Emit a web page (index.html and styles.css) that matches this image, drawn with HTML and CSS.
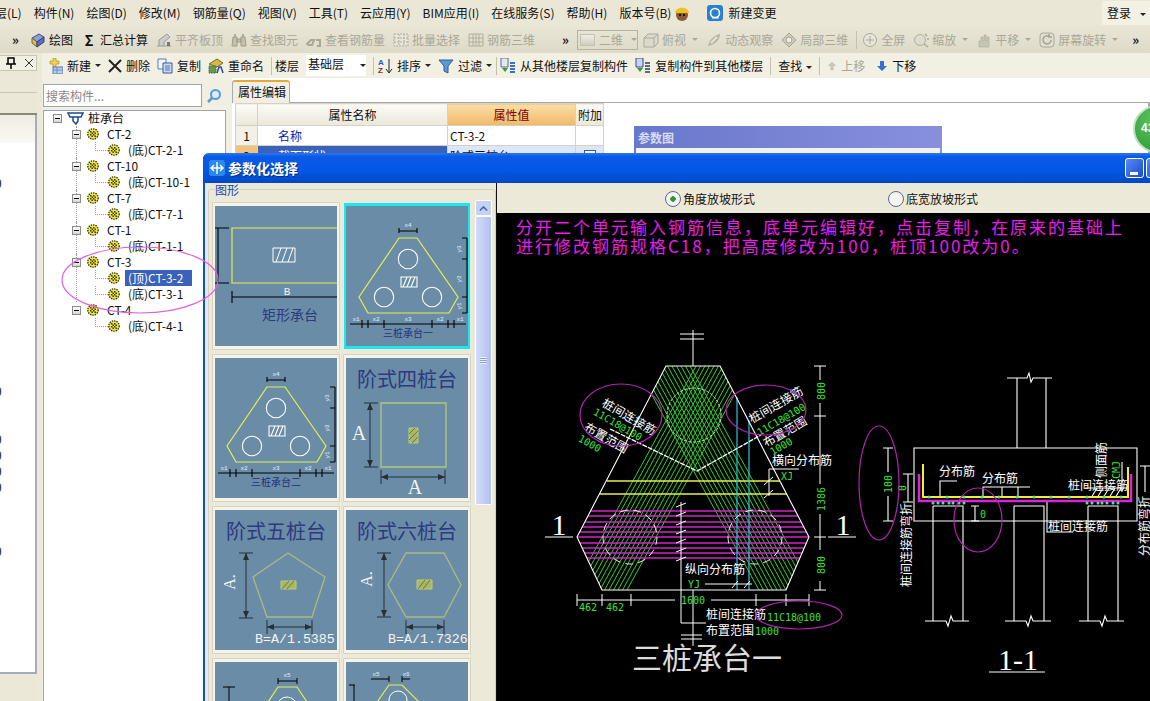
FILE: index.html
```html
<!DOCTYPE html>
<html lang="zh-CN">
<head>
  <meta charset="UTF-8" />
  <title>钢筋算量 - 参数化选择</title>
  <link rel="stylesheet" href="styles.css">
</head>
<body>
  <!-- Shared icons -->
  <svg class="sprites" aria-hidden="true">
    <symbol id="gear" viewBox="0 0 12 12">
      <circle cx="6" cy="6" r="5.200" fill="#f4e83c" stroke="#2a2a00" stroke-width="1.300" stroke-dasharray="1.400 1"/>
      <path d="M3 3h1.500v1.500H3zM6 3h1.500v1.500H6zM4.500 4.500H6V6H4.500zM7.500 4.500H9V6H7.500zM3 6h1.500v1.500H3zM6 6h1.500v1.500H6zM4.500 7.500H6V9H4.500zM7.500 7.500H9V9H7.500z" fill="#3a3a10"/>
    </symbol>
    <symbol id="i-draw" viewBox="0 0 16 16">
      <path d="M2 6l7-4 5 3-7 5z" fill="#8aa0d8" stroke="#4a4a8a"/>
      <path d="M2 6l5 4v5l-5-4z" fill="#d8c050" stroke="#6a6a40"/>
      <path d="M7 10l7-5v5l-7 5z" fill="#5a70b8" stroke="#3a3a7a"/>
    </symbol>
    <symbol id="i-flat" viewBox="0 0 16 16">
      <path d="M1 14h14M3 14V8l8-6 3 3-6 5v4" fill="#ccc" stroke="#999"/>
      <path d="M11 10h3v4h-3z" fill="#777"/>
    </symbol>
    <symbol id="i-find" viewBox="0 0 16 16">
      <path d="M2 5h4v9H1zM10 5h4l1 9h-5zM6 7h4v3H6z" fill="#c4c0ac" stroke="#a09c88"/>
      <path d="M3 2h2v3H3zM11 2h2v3h-2z" fill="#aaa"/>
    </symbol>
    <symbol id="i-view" viewBox="0 0 16 16">
      <path d="M1 12l4-4h3l-2 5H3zM10 8h4v6h-3" fill="none" stroke="#aaa69a" stroke-width="2"/>
    </symbol>
    <symbol id="i-batch" viewBox="0 0 16 16">
      <path d="M1 2h14v12H1zM1 6h14M1 10h14M6 2v12M11 2v12" fill="#e8e6da" stroke="#b0ae9e" stroke-dasharray="2 1"/>
    </symbol>
    <symbol id="i-3d" viewBox="0 0 16 16">
      <path d="M1 2h14v12H1zM1 6h14M1 10h14M5 2v12M8 2v12M11 2v12" fill="none" stroke="#b0ae9e"/>
    </symbol>
    <symbol id="i-cube" viewBox="0 0 16 16">
      <path d="M1 6l4-4h10v9l-4 4H1z" fill="#dcdacc" stroke="#aaa89a"/>
      <path d="M1 6h10v9M11 6l4-4" fill="none" stroke="#aaa89a"/>
    </symbol>
    <symbol id="i-orbit" viewBox="0 0 16 16">
      <path d="M2 14C3 8 8 3 14 2c0 6-5 11-12 12z" fill="#b8b8a8"/>
      <path d="M5 11l6-6" stroke="#e4e2d4" stroke-width="2"/>
    </symbol>
    <symbol id="i-local" viewBox="0 0 16 16">
      <path d="M8 1l7 7-7 7-7-7z" fill="#cfcdbf" stroke="#a4a294"/>
      <circle cx="8" cy="8" r="3" fill="#eeecdf" stroke="#a4a294"/>
    </symbol>
    <symbol id="i-full" viewBox="0 0 16 16">
      <circle cx="8" cy="8" r="6.500" fill="#e8e6da" stroke="#a8a89c"/>
      <path d="M8 4v8M4 8h8" stroke="#a8a89c"/>
    </symbol>
    <symbol id="i-zoom" viewBox="0 0 16 16">
      <circle cx="7" cy="8" r="5.500" fill="#dcdcd0" stroke="#b0b0a4"/>
      <path d="M11 12l4 3M12 2l2 2M14 7h2" stroke="#a8a89c" stroke-width="1.500"/>
    </symbol>
    <symbol id="i-pan" viewBox="0 0 16 16">
      <path d="M3 15V9h2V5h2v4h1V3h2v6h1V5h2v10z" fill="#c8c6b6" stroke="#aaa89a" stroke-width=".6"/>
    </symbol>
    <symbol id="i-rotate" viewBox="0 0 16 16">
      <rect x="1" y="1" width="14" height="14" rx="3" fill="#e0dece" stroke="#aaa89a"/>
      <path d="M12 8a4 4 0 1 1-2-3.500M10 2v3h3" fill="none" stroke="#a0a094" stroke-width="1.400"/>
    </symbol>
    <symbol id="i-new" viewBox="0 0 16 16">
      <path d="M3 3h3V0h3v3h3v3H9v3H6V6H3z" fill="#f0d050" stroke="#a08820" stroke-width=".6"/>
      <rect x="6" y="9" width="10" height="7" fill="#b8cdee" stroke="#5a7ab0"/>
      <path d="M6 12h10M10 9v7" stroke="#5a7ab0" stroke-width=".7"/>
    </symbol>
    <symbol id="i-copy" viewBox="0 0 16 16">
      <path d="M1 1h8v10H1z" fill="#f4f6fc" stroke="#5a7ab0"/>
      <path d="M6 5h9v10H6z" fill="#c8daf4" stroke="#3a5a9a"/>
      <path d="M8 8h5M8 10h5M8 12h5" stroke="#3a5a9a" stroke-width=".8"/>
    </symbol>
    <symbol id="i-rename" viewBox="0 0 16 16">
      <path d="M1 6l8-5 6 4-6 4z" fill="#d8b848" stroke="#806818"/>
      <path d="M1 8h7v7H1z" fill="#6a9a50" stroke="#3a6a30" stroke-dasharray="1.500 1"/>
      <path d="M9 15l2-6h2l2 6" fill="none" stroke="#2a4a9a" stroke-width="1.500"/>
    </symbol>
    <symbol id="i-from" viewBox="0 0 16 16">
      <path d="M1 0h7v9H1z" fill="#e4e8f4" stroke="#5a6a8a"/>
      <path d="M2 10l3 4 3-4z" fill="#3a9a3a"/>
      <path d="M10 5h5M10 8h5M10 11h5M10 14h5" stroke="#3a70c8" stroke-width="2"/>
    </symbol>
    <symbol id="i-to" viewBox="0 0 16 16">
      <path d="M1 0h7v9H1z" fill="#c8d4f4" stroke="#3a4a8a"/>
      <path d="M2 10l3 4 3-4z" fill="#3a9a3a"/>
      <path d="M10 5h5M10 8h5M10 11h5M10 14h5" stroke="#5a6a7a" stroke-width="2"/>
    </symbol>
    <symbol id="i-gem" viewBox="0 0 12 12">
      <path d="M6 1l5 5H8v5H4V6H1z"/>
    </symbol>

    <!-- three pile cap thumbnail, shared by two cards -->
    <symbol id="tri-cap" viewBox="0 0 122 140">
      <path d="M52 29h18l41 59-9 16H21l-9-16z" fill="none" stroke="#e0f050" stroke-width="1.200"/>
      <g fill="none" stroke="#fff" stroke-width="1.100">
        <circle cx="61" cy="50" r="9.700"/>
        <circle cx="37" cy="88" r="9.700"/>
        <circle cx="85" cy="88" r="9.700"/>
        <path d="M54 68h16v10H54zM56 78l4-10M60 78l4-10M64 78l4-10"/>
      </g>
      <path d="M52 19v5M70 19v5M52 22h18M120 29v75M115 29h5M115 50h5M115 88h5M115 104h5M3 115h116M15 111v8M21 111v8M37 111v8M85 111v8M101 111v8M107 111v8" fill="none" stroke="#000" stroke-width="1.100"/>
      <g class="thumb-tiny">
        <text x="61" y="18">x4</text>
        <text x="9" y="112">x1</text>
        <text x="29" y="112">x2</text>
        <text x="61" y="112">x3</text>
        <text x="93" y="112">x2</text>
        <text x="113" y="112">x1</text>
        <text transform="rotate(-90 114 40)" x="114" y="40">y3</text>
        <text transform="rotate(-90 114 70)" x="114" y="70">y2</text>
        <text transform="rotate(-90 114 97)" x="114" y="97">y1</text>
      </g>
    </symbol>
  </svg>

  <!-- Menu -->
  <div class="menubar">
    <span>层(L)</span><span>构件(N)</span><span>绘图(D)</span><span>修改(M)</span><span>钢筋量(Q)</span>
    <span>视图(V)</span><span>工具(T)</span><span>云应用(Y)</span><span>BIM应用(I)</span><span>在线服务(S)</span>
    <span>帮助(H)</span><span>版本号(B)</span>
    <svg class="icon-16 menu-hat" viewBox="0 0 16 16">
      <circle cx="8" cy="10" r="6" fill="#8a5a30"/>
      <path d="M1 8C2 1 14 1 15 8z" fill="#f0c020"/>
      <circle cx="6" cy="10" r="1" fill="#000"/><circle cx="10" cy="10" r="1" fill="#000"/>
    </svg>
    <svg class="icon-16 menu-change" viewBox="0 0 16 16">
      <rect width="16" height="16" rx="3" fill="#2a80d0"/>
      <circle cx="8" cy="8" r="4.500" fill="none" stroke="#fff" stroke-width="1.600"/>
      <path d="M5 13h7" stroke="#fff"/>
    </svg>
    <span class="menu-change-label">新建变更</span>
    <span class="login">登录 <i class="caret"></i></span>
  </div>

  <!-- Toolbar: draw and view -->
  <div class="toolbar toolbar-view">
    <span class="chevron">»</span>
    <span class="tool"><svg class="icon-16"><use href="#i-draw"/></svg>绘图</span>
    <span class="tool"><b class="sigma">Σ</b>汇总计算</span>
    <span class="tool off"><svg class="icon-16"><use href="#i-flat"/></svg>平齐板顶</span>
    <span class="tool off"><svg class="icon-16"><use href="#i-find"/></svg>查找图元</span>
    <span class="tool off"><svg class="icon-16"><use href="#i-view"/></svg>查看钢筋量</span>
    <span class="tool off"><svg class="icon-16"><use href="#i-batch"/></svg>批量选择</span>
    <span class="tool off"><svg class="icon-16"><use href="#i-3d"/></svg>钢筋三维</span>
    <span class="chevron chevron-mid">»</span>
    <span class="combo-2d"><i class="swatch"></i>二维<i class="caret"></i></span>
    <span class="tool off"><svg class="icon-16"><use href="#i-cube"/></svg>俯视<i class="caret"></i></span>
    <span class="tool off"><svg class="icon-16"><use href="#i-orbit"/></svg>动态观察</span>
    <span class="tool off"><svg class="icon-16"><use href="#i-local"/></svg>局部三维</span>
    <i class="sep"></i>
    <span class="tool off"><svg class="icon-16"><use href="#i-full"/></svg>全屏</span>
    <span class="tool off"><svg class="icon-16"><use href="#i-zoom"/></svg>缩放<i class="caret"></i></span>
    <span class="tool off"><svg class="icon-16"><use href="#i-pan"/></svg>平移<i class="caret"></i></span>
    <span class="tool off"><svg class="icon-16"><use href="#i-rotate"/></svg>屏幕旋转<i class="caret"></i></span>
    <span class="chevron chevron-end">»</span>
  </div>

  <div class="workspace">
    <!-- Collapsed dock on the far left -->
    <div class="dock">
      <div class="dock-head">
        <svg class="dock-pin" viewBox="0 0 10 12"><path d="M2 1h6v6H2zM0 7h10M5 7v5" fill="none" stroke="#000" stroke-width="1.500"/></svg>
        <svg class="dock-close" viewBox="0 0 10 10"><path d="M1 1l8 8M9 1l-8 8" stroke="#333"/></svg>
      </div>
      <div class="dock-bar"></div>
      <div class="dock-bar dock-bar-dark"></div>
      <div class="dock-fade"></div>
      <ul class="dock-list">
        <li></li><li></li><li>0</li><li></li><li></li><li></li><li></li><li></li><li></li><li></li><li></li><li></li><li></li>
        <li></li><li></li><li>0</li><li></li><li></li><li>0</li><li>0</li><li>0</li><li>0</li><li></li><li></li><li></li><li>0</li>
      </ul>
      <div class="dock-foot"></div>
    </div>

    <div class="main">
      <!-- Toolbar: components -->
      <div class="toolbar toolbar-parts">
        <span class="tool"><svg class="icon-16"><use href="#i-new"/></svg>新建<i class="caret"></i></span>
        <span class="tool"><svg class="icon-14" viewBox="0 0 14 14"><path d="M1 1l12 12M13 1L1 13" stroke="#222" stroke-width="2"/></svg>删除</span>
        <span class="tool"><svg class="icon-16"><use href="#i-copy"/></svg>复制</span>
        <span class="tool"><svg class="icon-16"><use href="#i-rename"/></svg>重命名</span>
        <i class="sep"></i>
        <span>楼层</span>
        <span class="floor-box">基础层<i class="caret"></i></span>
        <i class="sep"></i>
        <span class="tool"><svg class="icon-16" viewBox="0 0 16 16"><text class="sort-a" x="1" y="7">A</text><text class="sort-z" x="1" y="15">Z</text><path d="M12 1v13M9 11l3 4 3-4" fill="none" stroke="#222"/></svg>排序<i class="caret"></i></span>
        <span class="tool"><svg class="icon-16" viewBox="0 0 16 16"><path d="M1 2h14L10 8v7l-4-2V8z" fill="#5a9ad8" stroke="#2a5a98"/></svg>过滤<i class="caret"></i></span>
        <i class="sep sep-tight"></i>
        <span class="tool"><svg class="icon-16"><use href="#i-from"/></svg>从其他楼层复制构件</span>
        <span class="tool"><svg class="icon-16"><use href="#i-to"/></svg>复制构件到其他楼层</span>
        <i class="sep sep-roomy"></i>
        <span class="find">查找<i class="caret"></i></span>
        <i class="sep sep-roomy"></i>
        <span class="tool off"><svg class="icon-12 arrow-off"><use href="#i-gem"/></svg>上移</span>
        <span class="tool tool-down"><svg class="icon-12 arrow-on" viewBox="0 0 12 12"><path d="M6 11L1 6h3V1h4v5h3z"/></svg>下移</span>
      </div>

      <div class="content">
        <!-- Component tree -->
        <div class="nav">
          <div class="search">
            <input class="search-input" type="text" placeholder="搜索构件...">
            <svg class="search-btn" viewBox="0 0 16 16"><circle cx="9.500" cy="6.500" r="4.500" fill="#d8ecfa" stroke="#5a9ad0" stroke-width="2"/><path d="M6 10l-4 4" stroke="#5a9ad0" stroke-width="2.500"/></svg>
          </div>
          <div class="tree">
            <div class="node root">
              <i class="toggle"></i>
              <svg class="root-icon" viewBox="0 0 17 14"><path d="M1 2h15l-2 4H3zM6 6h5v4l-2 3-3-3z" fill="#fff" stroke="#1a4a8a" stroke-width="1.500"/></svg>
              <span>桩承台</span>
            </div>
            <div class="branches">
              <div class="branch">
                <div class="node"><i class="toggle"></i><svg class="gear"><use href="#gear"/></svg><span>CT-2</span></div>
                <div class="node leaf"><svg class="gear"><use href="#gear"/></svg><span>(底)CT-2-1</span></div>
              </div>
              <div class="branch">
                <div class="node"><i class="toggle"></i><svg class="gear"><use href="#gear"/></svg><span>CT-10</span></div>
                <div class="node leaf"><svg class="gear"><use href="#gear"/></svg><span>(底)CT-10-1</span></div>
              </div>
              <div class="branch">
                <div class="node"><i class="toggle"></i><svg class="gear"><use href="#gear"/></svg><span>CT-7</span></div>
                <div class="node leaf"><svg class="gear"><use href="#gear"/></svg><span>(底)CT-7-1</span></div>
              </div>
              <div class="branch">
                <div class="node"><i class="toggle"></i><svg class="gear"><use href="#gear"/></svg><span>CT-1</span></div>
                <div class="node leaf"><svg class="gear"><use href="#gear"/></svg><span>(底)CT-1-1</span></div>
              </div>
              <div class="branch">
                <div class="node"><i class="toggle"></i><svg class="gear"><use href="#gear"/></svg><span>CT-3</span></div>
                <div class="node leaf"><svg class="gear"><use href="#gear"/></svg><span class="picked">(顶)CT-3-2</span></div>
                <div class="node leaf"><svg class="gear"><use href="#gear"/></svg><span>(底)CT-3-1</span></div>
              </div>
              <div class="branch">
                <div class="node"><i class="toggle"></i><svg class="gear"><use href="#gear"/></svg><span>CT-4</span></div>
                <div class="node leaf"><svg class="gear"><use href="#gear"/></svg><span>(底)CT-4-1</span></div>
              </div>
            </div>
          </div>
        </div>

        <!-- Property editor, mostly behind the dialog -->
        <div class="editor">
          <div class="tabs"><span class="tab">属性编辑</span></div>
          <div class="editor-body">
            <table class="props">
              <tr>
                <th class="col-no"></th>
                <th class="col-name">属性名称</th>
                <th class="col-value">属性值</th>
                <th class="col-extra">附加</th>
              </tr>
              <tr>
                <td class="row-no">1</td>
                <td class="prop-name">名称</td>
                <td>CT-3-2</td>
                <td></td>
              </tr>
              <tr class="row-on">
                <td class="row-no">2</td>
                <td class="prop-name">截面形状</td>
                <td>阶式三桩台</td>
                <td><i class="check"></i></td>
              </tr>
            </table>
            <div class="param-panel">
              <div class="param-title">参数图</div>
              <div class="param-view"></div>
            </div>
          </div>
        </div>
      </div>
    </div>
  </div>

  <!-- Progress badge -->
  <div class="badge">43</div>

  <!-- Dialog -->
  <div class="dialog">
    <div class="dialog-title">
      <svg class="dialog-icon" viewBox="0 0 16 16">
        <rect width="16" height="16" rx="3" fill="#2a8ae8"/>
        <path d="M8 2v12M2 8h12M5 5l-3 3 3 3M11 5l3 3-3 3" fill="none" stroke="#fff" stroke-width="1.400"/>
      </svg>
      <span class="dialog-name">参数化选择</span>
      <span class="win-btn win-min"><i></i></span>
      <span class="win-btn"></span>
    </div>
    <div class="dialog-body">
      <!-- Shape picker -->
      <fieldset class="shapes">
        <legend>图形</legend>
        <div class="shapes-inner">
          <div class="card-grid">
            <div class="card">
              <svg class="thumb" viewBox="0 0 122 140">
                <path d="M122 22H17v55h105" fill="none" stroke="#e0f050" stroke-width="1.200"/>
                <path d="M0 22h14M0 77h14M3 22v55M17 85v12M17 91h105" fill="none" stroke="#000" stroke-width="1.100"/>
                <path d="M58 42h22v14H58zM61 56l5-14M67 56l5-14M73 56l5-14" fill="none" stroke="#fff"/>
                <text class="thumb-mid" x="72" y="89">B</text>
                <text class="thumb-name" x="75" y="114">矩形承台</text>
              </svg>
            </div>
            <div class="card selected">
              <svg class="thumb" viewBox="0 0 122 140">
                <use href="#tri-cap" x="1" y="3" width="122" height="140"/>
                <text class="thumb-small" x="62" y="131">三桩承台一</text>
              </svg>
            </div>
            <div class="card">
              <svg class="thumb" viewBox="0 0 122 140">
                <use href="#tri-cap" width="122" height="140"/>
                <text class="thumb-small" x="61" y="128">三桩承台二</text>
              </svg>
            </div>
            <div class="card">
              <svg class="thumb" viewBox="0 0 122 140">
                <text class="thumb-title" x="61" y="29">阶式四桩台</text>
                <path d="M35 45h65v64H35z" fill="none" stroke="#b0c878" stroke-width="1.300"/>
                <path d="M63 70h9v15h-9z" fill="#a8b860" stroke="#c0cc70"/>
                <path d="M63 76l6-6M63 82l9-9M66 85l6-6" stroke="#6a7a50"/>
                <path d="M18 45h14M18 109h14M24 45v64M35 112v14M99 112v14M35 119h64" fill="none" stroke="#243038"/>
                <path d="M24 45l-3 7h6zM24 109l-3-7h6zM35 119l7-3v6zM99 119l-7-3v6z" fill="#243038"/>
                <text class="thumb-letter" x="13" y="82">A</text>
                <text class="thumb-letter" x="69" y="136">A</text>
              </svg>
            </div>
            <div class="card">
              <svg class="thumb" viewBox="0 0 122 140">
                <text class="thumb-title" x="61" y="29">阶式五桩台</text>
                <path d="M73 43l37 24-13 40H52L38 67z" fill="none" stroke="#a8bc80" stroke-width="1.300"/>
                <path d="M66 71h15v8H66z" fill="#a8b860" stroke="#c0cc70"/>
                <path d="M67 79l7-8M72 79l7-8" stroke="#6a7a50"/>
                <path d="M24 43h14M24 108h14M31 43v65M52 110v14M97 110v14M52 117h45" fill="none" stroke="#243038"/>
                <path d="M31 43l-3 7h6zM31 108l-3-7h6zM52 117l7-3v6zM97 117l-7-3v6z" fill="#243038"/>
                <text class="thumb-letter-side" transform="rotate(-90 20 72)" x="20" y="72">A.</text>
                <text class="thumb-formula" x="40" y="133">B=A/1.5385</text>
              </svg>
            </div>
            <div class="card">
              <svg class="thumb" viewBox="0 0 122 140">
                <text class="thumb-title" x="61" y="29">阶式六桩台</text>
                <path d="M60 43h38l17 32-17 32H60L42 75z" fill="none" stroke="#a8bc80" stroke-width="1.300"/>
                <path d="M71 70h15v9H71z" fill="#a8b860" stroke="#c0cc70"/>
                <path d="M72 79l7-9M77 79l7-9" stroke="#6a7a50"/>
                <path d="M31 43h14M31 107h14M38 43v64M60 110v14M98 110v14M60 117h38" fill="none" stroke="#243038"/>
                <path d="M38 43l-3 7h6zM38 107l-3-7h6zM60 117l7-3v6zM98 117l-7-3v6z" fill="#243038"/>
                <text class="thumb-letter-side" transform="rotate(-90 26 69)" x="26" y="69">A.</text>
                <text class="thumb-formula" x="42" y="133">B=A/1.7326</text>
              </svg>
            </div>
            <div class="card">
              <svg class="thumb" viewBox="0 0 122 140">
                <path d="M63 25h19l28 42H35z" fill="none" stroke="#e0f050" stroke-width="1.200"/>
                <circle cx="72" cy="45" r="10" fill="none" stroke="#fff"/>
                <path d="M63 16v6M82 16v6M63 19h19M8 25h12M14 25v50" fill="none" stroke="#000"/>
                <text class="thumb-tiny" x="72" y="15">x5</text>
              </svg>
            </div>
            <div class="card">
              <svg class="thumb" viewBox="0 0 122 140">
                <path d="M43 23h13l40 40H15z" fill="none" stroke="#e0f050" stroke-width="1.200"/>
                <circle cx="52" cy="38" r="9" fill="none" stroke="#fff"/>
                <path d="M25 17h18M43 14v6M56 14v6M56 17h8M3 23h6M8 23v40" fill="none" stroke="#000"/>
                <text class="thumb-tiny" x="30" y="14">x5</text>
                <text class="thumb-tiny" x="60" y="14">x6</text>
              </svg>
            </div>
          </div>
          <div class="scroll">
            <div class="scroll-up"><svg viewBox="0 0 10 6"><path d="M1 5l4-4 4 4" fill="none" stroke="#4a6ab0" stroke-width="1.800"/></svg></div>
            <div class="scroll-thumb"><i></i></div>
          </div>
        </div>
      </fieldset>

      <!-- Drawing view -->
      <div class="viewer">
        <div class="radio-row">
          <label class="radio on">角度放坡形式</label>
          <label class="radio">底宽放坡形式</label>
        </div>
        <div class="canvas">
          <p class="remark">分开二个单元输入钢筋信息，底单元编辑好，点击复制，在原来的基础上<br>进行修改钢筋规格C18，把高度修改为100，桩顶100改为0。</p>
          <!-- viewBox keeps page coordinates so the drawing is easy to measure -->
          <svg class="drawing" viewBox="497 213 653 488">
            <defs>
              <clipPath id="hex-clip"><path d="M666 362h54l89 171-23 53H602l-25-53z"/></clipPath>
              <path id="band" d="M573 586L696 362M577.500 586L700.500 362M582 586L705 362M586.500 586L709.500 362M591 586L714 362M595.500 586L718.500 362M600 586L723 362M604.500 586L727.500 362M609 586L732 362M613.500 586L736.500 362M618 586L741 362M622.500 586L745.500 362M627 586L750 362"/>
            </defs>

            <!-- plan: rebar -->
            <g clip-path="url(#hex-clip)">
              <g fill="none" stroke="#2fd02f">
                <use href="#band"/>
                <use href="#band" transform="translate(1386 0) scale(-1 1)"/>
              </g>
              <path d="M560 507h260M560 512h260M560 518h260M560 523h260M560 528h260M560 533h260M560 539h260M560 544h260M560 549h260M560 554h260" stroke="#d025c8" stroke-width="1.300"/>
            </g>
            <path d="M607 477h173M599 490h188" stroke="#e8ee50" stroke-width="1.300"/>
            <path d="M737 393v193M749 416v170" stroke="#28c4dc" stroke-width="1.200"/>

            <!-- plan: outline -->
            <path d="M666 362h54l89 171-23 53H602l-25-53z" fill="none" stroke="#fff" stroke-width="1.100"/>
            <g fill="none" stroke="#c8f0c0" stroke-dasharray="3 1.500">
              <circle cx="694" cy="411" r="27"/>
            </g>
            <g fill="none" stroke="#f0f0e0" stroke-dasharray="8 5">
              <circle cx="630" cy="533" r="27"/>
              <circle cx="755" cy="533" r="27"/>
            </g>
            <path d="M610 425l87 42 64-36" fill="none" stroke="#fff" stroke-width="1.300" stroke-dasharray="5 1"/>

            <!-- plan: section marks and leaders -->
            <g fill="none" stroke="#fff">
              <path d="M693 326v36M680 330h24M680 335h24M693 586v56M681 631h21M681 635h21"/>
              <path d="M681 498v121h25M676 503l10-4M676 512l10-4M676 521l10-4M676 530l10-4M676 539l10-4M676 548l10-4M676 557l10-4"/>
              <path d="M545 533h28M828 533h28"/>
              <path d="M820 362v14M820 399v81M820 510v36M820 577v9M814 362h12M814 412h12M814 533h12M814 586h12"/>
              <path d="M577 596h98M711 596h98M577 590v12M602 590v12M631 590v12M756 590v12M786 590v12M809 590v12"/>
              <path d="M769 465h30M769 465v27M764 481l9-8M764 494l9-8"/>
              <path d="M705 580h47M732 584l6-7M744 584l6-7"/>
            </g>

            <g class="cad-big">
              <text x="559" y="531">1</text>
              <text x="843" y="531">1</text>
            </g>

            <g class="cad-white">
              <text transform="rotate(30 629 413)" x="629" y="417">桩间连接筋</text>
              <text transform="rotate(30 606 434)" x="606" y="438">布置范围</text>
              <text transform="rotate(-30 776 401)" x="776" y="405">桩间连接筋</text>
              <text transform="rotate(-30 785 428)" x="785" y="432">布置范围</text>
              <text x="802" y="461">横向分布筋</text>
              <text x="715" y="570">纵向分布筋</text>
              <text x="736" y="615">桩间连接筋</text>
              <text x="730" y="631">布置范围</text>
            </g>
            <g class="cad-green">
              <text transform="rotate(30 618 420)" x="618" y="424">11C18@100</text>
              <text transform="rotate(30 590 439)" x="590" y="443">1000</text>
              <text transform="rotate(-30 781 415)" x="781" y="419">11C18@100</text>
              <text transform="rotate(-30 781 442)" x="781" y="446">1000</text>
              <text x="787" y="476">XJ</text>
              <text x="694" y="584">YJ</text>
              <text x="693" y="600">1600</text>
              <text x="588" y="607">462</text>
              <text x="615" y="607">462</text>
              <text x="794" y="617">11C18@100</text>
              <text x="767" y="631">1000</text>
              <text transform="rotate(-90 821 387)" x="821" y="391">800</text>
              <text transform="rotate(-90 821 495)" x="821" y="499">1386</text>
              <text transform="rotate(-90 821 561)" x="821" y="565">800</text>
            </g>
            <text class="cad-title" x="707" y="665">三桩承台一</text>

            <!-- section 1-1 -->
            <g fill="none" stroke="#fff" stroke-width="1.100">
              <path d="M914 444h223v73H914z"/>
              <path d="M1017 444v-70M1046 444v-70M1007 374h20l2-5 2 9 2-4h19"/>
              <path d="M933 502h30v115M933 502v115M925 617h21l2 5 3-10 2 5h16"/>
              <path d="M1014 502h30v115M1014 502v115M1005 617h21l2 5 3-10 2 5h18"/>
              <path d="M1088 502h30v115M1088 502v115M1079 617h21l2 5 3-10 2 5h17"/>
              <path d="M940 493v-16h17M983 493v-10h47M1002 483v10M1018 483v10"/>
              <path d="M1047 497v31h26"/>
              <path d="M1091 494l6-10M1097 494l6-10M1103 494l6-10M1109 494l6-10M1115 494l6-10M1085 484h42"/>
              <path d="M1122 458v30"/>
              <path d="M888 444v24M888 492v25M883 444h10M883 517h10"/>
              <path d="M908 470v28M903 470h10M903 498h10"/>
              <path d="M975 502v15M971 502h8M971 517h8"/>
              <path d="M1145 462v26M1140 462h10"/>
            </g>
            <path d="M923 460v33h205v-30" fill="none" stroke="#f0f030" stroke-width="2"/>
            <path d="M919 470v27h212v-27" fill="none" stroke="#e020e0" stroke-width="2.500"/>
            <g class="rebar-dots">
              <circle cx="929" cy="493" r="1.500"/><circle cx="947" cy="493" r="1.500"/><circle cx="964" cy="493" r="1.500"/>
              <circle cx="982" cy="493" r="1.500"/><circle cx="999" cy="493" r="1.500"/><circle cx="1017" cy="493" r="1.500"/>
              <circle cx="1034" cy="493" r="1.500"/><circle cx="1051" cy="493" r="1.500"/><circle cx="1069" cy="493" r="1.500"/>
              <circle cx="1087" cy="493" r="1.500"/><circle cx="1104" cy="493" r="1.500"/><circle cx="1121" cy="493" r="1.500"/>
              <circle cx="933" cy="499" r="1.500"/><circle cx="938" cy="499" r="1.500"/><circle cx="943" cy="499" r="1.500"/>
              <circle cx="949" cy="499" r="1.500"/><circle cx="953" cy="499" r="1.500"/><circle cx="959" cy="499" r="1.500"/>
              <circle cx="964" cy="499" r="1.500"/><circle cx="1087" cy="499" r="1.500"/><circle cx="1092" cy="499" r="1.500"/>
              <circle cx="1098" cy="499" r="1.500"/><circle cx="1102" cy="499" r="1.500"/><circle cx="1107" cy="499" r="1.500"/>
              <circle cx="1113" cy="499" r="1.500"/><circle cx="1118" cy="499" r="1.500"/>
            </g>
            <g class="cad-white">
              <text x="957" y="472">分布筋</text>
              <text x="1000" y="479">分布筋</text>
              <text x="1098" y="486">桩间连接筋</text>
              <text x="1078" y="527">桩间连接筋</text>
              <text transform="rotate(-90 1102 456)" x="1102" y="460">侧面筋</text>
              <text transform="rotate(-90 907 541)" x="907" y="545">桩间连接筋弯折</text>
              <text transform="rotate(-90 1145 522)" x="1145" y="526">分布筋弯折</text>
            </g>
            <g class="cad-green">
              <text transform="rotate(-90 888 480)" x="888" y="484">100</text>
              <text transform="rotate(-90 902 484)" x="902" y="488">0</text>
              <text x="983" y="514">0</text>
              <text class="cad-green-sm" transform="rotate(-90 1116 466)" x="1116" y="470">CMJ</text>
            </g>
            <text class="cad-section" x="1018" y="666">1-1</text>
            <path d="M989 668h56" stroke="#fff"/>

            <!-- hand drawn notes -->
            <g fill="none" stroke="#b024b0" stroke-width="1.200">
              <ellipse cx="621" cy="411" rx="41" ry="31"/>
              <ellipse cx="766" cy="406" rx="40" ry="25"/>
              <ellipse cx="799" cy="611" rx="43" ry="14"/>
              <ellipse cx="879" cy="479" rx="20" ry="57"/>
              <ellipse cx="978" cy="516" rx="24" ry="32"/>
            </g>
          </svg>
        </div>
      </div>
    </div>
  </div>

  <!-- Hand drawn ring around the picked component, over tree and dialog -->
  <svg class="note-ring" viewBox="0 0 162 72">
    <ellipse cx="81" cy="36" rx="78" ry="33" fill="none" stroke="#e060e0" stroke-width="1.200"/>
  </svg>
</body>
</html>
```

FILE: styles.css
```css
* {
  box-sizing: border-box;
}

html, body {
  height: 701px;
  overflow: hidden;
}

body {
  position: relative;
  width: 1150px;
  margin: 0;
  background-color: #ece9d8;
  color: #111;
  font-family: "Noto Sans CJK SC", "Liberation Sans", sans-serif;
  font-size: 12px;
  line-height: 16px;
}

i {
  font-style: normal;
}

.sprites {
  display: none;
}

.icon-16 {
  width: 16px;
  height: 16px;
  flex: none;
}

.icon-14 {
  width: 14px;
  height: 14px;
  flex: none;
}

.icon-12 {
  width: 12px;
  height: 12px;
  flex: none;
}

.caret {
  display: inline-block;
  width: 0;
  height: 0;
  margin-left: 6px;
  vertical-align: middle;
  border-left: 3px solid transparent;
  border-right: 3px solid transparent;
  border-top: 3px solid #222;
}

/* Menu */
.menubar {
  display: flex;
  align-items: center;
  gap: 12px;
  height: 26px;
  margin-left: -5px;
  background-color: #ebe7d6;
  white-space: nowrap;
}

.menu-hat {
  margin-left: -9px;
}

.menu-change {
  margin-left: 5px;
}

.menu-change-label {
  margin-left: -7px;
}

.login {
  display: block;
  margin-left: auto;
  width: 48px;
  padding: 4px 0 4px 5px;
  background-color: #f3f0e4;
}

/* Toolbars */
.toolbar {
  display: flex;
  align-items: center;
  white-space: nowrap;
}

.toolbar-view {
  gap: 8px;
  height: 27px;
  padding-left: 12px;
  background: linear-gradient(#e9e6d6, #dedac8);
}

.toolbar-parts {
  gap: 7px;
  height: 25px;
  padding-left: 5px;
  background-color: #f2efe3;
}

.tool {
  display: flex;
  align-items: center;
  gap: 4px;
}

.toolbar-view .tool {
  gap: 3px;
}

.tool .caret {
  margin-left: 0;
}

.toolbar-view .tool .caret {
  margin-left: 3px;
}

.tool.off {
  color: #a9a798;
}

.tool.off .caret {
  border-top-color: #a9a798;
}

.tool-down {
  margin-left: 4px;
}

.find .caret {
  margin-left: 4px;
}

.chevron {
  width: 10px;
  font-size: 13px;
  font-weight: bold;
}

.chevron-mid {
  width: 7px;
  margin-left: 19px;
}

.chevron-end {
  margin-left: 6px;
}

.sigma {
  width: 16px;
  font-size: 14px;
  text-align: center;
}

.sep {
  width: 1px;
  height: 18px;
  margin-right: -4px;
  background-color: #c4c1b0;
}

.toolbar-view .sep {
  margin-right: -3px;
}

.sep-tight {
  margin-left: -3px;
}

.sep-roomy {
  margin-right: 0;
}

.combo-2d {
  display: flex;
  align-items: center;
  width: 61px;
  height: 20px;
  margin-right: -3px;
  padding-left: 2px;
  border: 1px solid #b4b2a4;
  color: #a9a798;
}

.combo-2d .caret {
  margin-left: 8px;
  border-top-color: #a9a798;
}

.swatch {
  width: 17px;
  height: 12px;
  margin-right: 4px;
  background: linear-gradient(#f0eee4, #cfcdc0);
  border: 1px solid #c4c2b4;
}

.floor-box {
  display: flex;
  width: 60px;
  height: 21px;
  padding: 1px 0 0 2px;
  background-color: #fff;
}

.floor-box .caret {
  margin: 8px 0 0 16px;
}

.sort-a,
.sort-z {
  font-family: "Liberation Sans", sans-serif;
  font-size: 8px;
  font-weight: bold;
}

.sort-a {
  fill: #2a5ac0;
}

.sort-z {
  fill: #a02020;
}

.arrow-off {
  width: 10px;
  fill: #c8c6b8;
}

.arrow-on {
  width: 12px;
  fill: #3a70d0;
}

/* Workspace */
.workspace {
  display: flex;
  height: 648px;
}

.dock {
  display: flex;
  flex-direction: column;
  width: 37px;
  margin-right: 5px;
  flex: none;
}

.dock-head {
  display: flex;
  align-items: center;
  justify-content: flex-end;
  gap: 8px;
  height: 16px;
  margin-top: 2px;
  padding-right: 2px;
  border: 1px solid #c8c5b4;
  border-left: none;
  background-color: #f2efe3;
}

.dock-pin {
  width: 10px;
  height: 12px;
}

.dock-close {
  width: 10px;
  height: 10px;
}

.dock-bar {
  height: 22px;
  border-bottom: 1px solid #c8c5b4;
  background-color: #ebe8d8;
}

.dock-bar-dark {
  border-bottom: 2px solid #8a8876;
}

.dock-fade {
  height: 28px;
  background: linear-gradient(#efece0, #faf9f4);
  border-right: 2px solid #a8aac0;
}

.dock-list {
  height: 531px;
  margin: 0;
  padding: 0;
  list-style: none;
  overflow: hidden;
  background-color: #fff;
  border-right: 2px solid #a8aac0;
  border-bottom: 2px solid #a8aac0;
}

.dock-list li {
  height: 16px;
  margin-left: -5px;
}

.dock-foot {
  flex: 1;
  background-color: #ebe8d8;
}

.main {
  flex: 1;
  min-width: 0;
}

.content {
  display: flex;
  height: 623px;
}

/* Component tree */
.nav {
  width: 190px;
  flex: none;
  padding: 6px 6px 0 1px;
  background-color: #f1eee2;
}

.search {
  display: flex;
  height: 25px;
  margin-bottom: 1px;
}

.search-input {
  width: 159px;
  height: 23px;
  padding: 0 2px;
  border: 1px solid #9aa4b4;
  font: inherit;
}

.search-input::placeholder {
  color: #888;
}

.search-btn {
  width: 16px;
  height: 16px;
  margin: 4px 0 0 4px;
}

.tree {
  height: 592px;
  border: 1px solid #9aa4b4;
  background-color: #fff;
}

.node {
  display: flex;
  align-items: center;
  height: 16px;
}

.root {
  margin-top: -1px;
  padding-left: 9px;
}

.root-icon {
  width: 17px;
  height: 14px;
  margin-left: 5px;
}

.toggle {
  position: relative;
  width: 9px;
  height: 9px;
  border: 1px solid #8a8a8a;
  background: linear-gradient(#fff, #d8d8d0);
}

.toggle::after {
  content: "";
  position: absolute;
  left: 1px;
  top: 3px;
  width: 5px;
  height: 1px;
  background-color: #000;
}

.branches {
  margin-left: 32px;
}

.branch {
  border-left: 1px dotted #999;
}

.branch:last-child {
  border-left-color: transparent;
}

.branch > .node:first-child {
  margin-left: -5px;
}

.gear {
  width: 12px;
  height: 12px;
  margin-left: 6px;
  flex: none;
}

.node span {
  margin-left: 8px;
}

.node.root span {
  margin-left: 4px;
}

.leaf {
  padding-left: 18px;
}

.leaf::before {
  content: "";
  align-self: flex-start;
  width: 12px;
  height: 8px;
  border-left: 1px dotted #999;
  border-bottom: 1px dotted #999;
}

.leaf .gear {
  margin-left: 0;
}

.leaf span {
  width: 67px;
  margin-left: 5px;
  padding-left: 3px;
}

.leaf .picked {
  background-color: #3a62b8;
  color: #fff;
}

/* Property editor */
.editor {
  flex: 1;
  min-width: 0;
  background-color: #fff;
}

.tabs {
  height: 25px;
  padding: 2px 0 0 0;
  background-color: #fff;
  border-bottom: 1px solid #a8aab0;
}

.tab {
  display: block;
  width: 58px;
  height: 23px;
  padding: 2px 0 0 5px;
  background-color: #f1eee2;
  border: 1px solid #a8aab0;
  border-top: 2px solid #e8a838;
  border-bottom: none;
  border-radius: 3px 3px 0 0;
}

.editor-body {
  display: flex;
  height: 598px;
  padding-left: 3px;
  border-right: 2px solid #a8aab0;
}

.props {
  width: 368px;
  height: 62px;
  border-collapse: collapse;
  table-layout: fixed;
}

.props th,
.props td {
  height: 20px;
  padding: 0 2px;
  border: 1px solid #d4d2c6;
  font-weight: normal;
  text-align: left;
  white-space: nowrap;
  overflow: hidden;
}

.props th {
  height: 22px;
  background: linear-gradient(#fbfaf4, #ebe8da);
  text-align: center;
}

.props .col-no {
  width: 22px;
}

.props .col-name {
  width: 190px;
}

.props .col-value {
  width: 128px;
  background: linear-gradient(#fadfa8, #f0b868);
  color: #800000;
}

.props .col-extra {
  width: 28px;
}

.props .row-no {
  background-color: #f3f1e6;
  text-align: center;
}

.props .prop-name {
  padding-left: 20px;
  color: #0a1ab0;
}

.row-on .row-no {
  background-color: #f3c27a;
}

.row-on .prop-name {
  background-color: #3a62b8;
  color: #fff;
}

.row-on td {
  background-color: #dee5f5;
}

.check {
  display: block;
  width: 12px;
  height: 12px;
  margin: 2px auto;
  border: 1px solid #3a5a8a;
  background-color: #f4f6fc;
}

.param-panel {
  width: 308px;
  height: 120px;
  margin: 23px 0 0 30px;
  padding: 0 2px;
  background: linear-gradient(90deg, #6878cc, #8890dc);
}

.param-title {
  height: 22px;
  padding: 4px 0 0 2px;
  color: #d8dcf0;
  font-weight: bold;
}

.param-view {
  height: 96px;
  background-color: #f4f2e6;
}

.badge {
  position: absolute;
  left: 1133px;
  top: 105px;
  width: 48px;
  height: 48px;
  padding: 13px 0 0 6px;
  border: 2px solid #c0e0c0;
  border-radius: 50%;
  background: radial-gradient(circle at 50% 30%, #5cc860, #2c9a38);
  color: #fff;
  font-family: "Liberation Sans", sans-serif;
  font-size: 12px;
  font-weight: bold;
}

/* Dialog */
.dialog {
  position: absolute;
  left: 203px;
  top: 153px;
  width: 964px;
  height: 548px;
  border-left: 2px solid #0a52d8;
  border-radius: 6px 0 0 0;
  background-color: #ece9d8;
}

.dialog-title {
  display: flex;
  align-items: center;
  height: 30px;
  margin-left: -2px;
  padding: 0 2px 0 6px;
  border-radius: 6px 0 0 0;
  background: linear-gradient(#2a78f0 0, #0a5ae8 12%, #0456e4 60%, #0348c4 100%);
  color: #fff;
  white-space: nowrap;
}

.dialog-icon {
  width: 16px;
  height: 16px;
  flex: none;
}

.dialog-name {
  margin-left: 3px;
  font-size: 14px;
  font-weight: bold;
  text-shadow: 1px 1px 0 #02307a;
}

.win-btn {
  display: block;
  width: 19px;
  height: 20px;
  margin-left: 2px;
  border: 1px solid #fff;
  border-radius: 3px;
  background: linear-gradient(135deg, #5a8af0, #1a4ad0);
}

.win-min {
  margin-left: auto;
}

.win-btn i {
  display: block;
  width: 8px;
  height: 3px;
  margin: 13px 0 0 4px;
  background-color: #fff;
}

.dialog-body {
  display: flex;
  height: 518px;
}

/* Shape picker */
.shapes {
  width: 288px;
  height: 530px;
  flex: none;
  margin: 0 0 0 3px;
  padding: 0;
  border: 1px solid #d4d1c0;
  border-radius: 3px;
  overflow: hidden;
}

.shapes legend {
  margin-left: 6px;
  padding: 0;
  color: #1a4ab0;
  line-height: 13px;
}

.shapes-inner {
  display: flex;
  padding: 7px 0 0 4px;
}

.card-grid {
  display: grid;
  grid-template-columns: 126px 126px;
  grid-auto-rows: 146px;
  gap: 6px 5px;
  width: 257px;
  flex: none;
}

.card {
  padding: 3px 2px;
  background-color: #f6f3e9;
  outline: 1px solid #d6d3c4;
}

.card.selected {
  background-color: #18e8f0;
  outline: none;
}

.thumb {
  display: block;
  width: 122px;
  height: 140px;
  background-color: #6b8ca6;
}

.thumb-tiny {
  fill: #e8f0f4;
  font-family: "Liberation Mono", monospace;
  font-size: 6px;
  text-anchor: middle;
}

.thumb-small {
  fill: #22307a;
  font-size: 10px;
  text-anchor: middle;
}

.thumb-name {
  fill: #2a3a80;
  font-size: 14px;
  text-anchor: middle;
}

.thumb-title {
  fill: #2c3a80;
  font-size: 20px;
  text-anchor: middle;
}

.thumb-mid {
  fill: #f0f0f0;
  font-family: "Liberation Mono", monospace;
  font-size: 11px;
  text-anchor: middle;
}

.thumb-letter,
.thumb-letter-side {
  fill: #f2f4f6;
  font-family: "Liberation Serif", serif;
  font-size: 20px;
  text-anchor: middle;
}

.thumb-letter-side {
  font-size: 16px;
}

.thumb-formula {
  fill: #f2f4f6;
  font-family: "Liberation Mono", monospace;
  font-size: 13.300px;
}

.scroll {
  width: 17px;
  margin: -3px 0 0 5px;
  flex: none;
}

.scroll-up {
  height: 16px;
  padding: 5px 3px 0;
  border: 1px solid #fff;
  border-radius: 2px;
  background-color: #c6d2f4;
}

.scroll-up svg {
  display: block;
}

.scroll-thumb {
  display: flex;
  align-items: center;
  justify-content: center;
  height: 289px;
  border: 1px solid #fff;
  border-radius: 2px;
  background: linear-gradient(90deg, #d2dcfa, #b0c0f0);
}

.scroll-thumb i {
  width: 7px;
  height: 7px;
  background: repeating-linear-gradient(#eef2fe 0 1px, #8aa0e0 1px 2px);
}

/* Drawing view */
.viewer {
  width: 654px;
  flex: none;
  border-left: 1px solid #111;
}

.radio-row {
  display: flex;
  height: 30px;
  padding: 8px 0 0 168px;
  gap: 133px;
  background-color: #ece9d8;
  font-size: 12px;
}

.radio {
  display: flex;
  align-items: center;
  height: 16px;
  color: #111;
}

.radio::before {
  content: "";
  width: 14px;
  height: 14px;
  margin-right: 2px;
  border: 1px solid #5a6a90;
  border-radius: 50%;
  background-color: #f4f4f0;
}

.radio.on::before {
  background: radial-gradient(circle, #2a9a3a 0 2.500px, #f4f4f0 3px);
}

.canvas {
  height: 488px;
  background-color: #000;
  overflow: hidden;
}

.remark {
  height: 0;
  margin: 0;
  padding: 4px 0 0 19px;
  color: #e81ee8;
  font-size: 17px;
  line-height: 19px;
  letter-spacing: 2px;
  white-space: nowrap;
}

.drawing {
  display: block;
  width: 653px;
  height: 488px;
}

.cad-white,
.cad-green {
  font-size: 12px;
  text-anchor: middle;
}

.cad-white {
  fill: #fff;
}

.cad-green {
  fill: #3ee03e;
  font-family: "DejaVu Sans Mono", monospace;
  font-size: 10px;
}

.cad-green-sm {
  font-size: 10px;
}

.rebar-dots {
  fill: #50e0a0;
}

.cad-big {
  fill: #fff;
  font-family: "Liberation Serif", serif;
  font-size: 30px;
  text-anchor: middle;
}

.cad-title {
  fill: #dcdcdc;
  font-size: 30px;
  text-anchor: middle;
}

.cad-section {
  fill: #fff;
  font-family: "Liberation Serif", serif;
  font-size: 30px;
  text-anchor: middle;
}

.note-ring {
  position: absolute;
  left: 59px;
  top: 244px;
  width: 162px;
  height: 72px;
}
```
